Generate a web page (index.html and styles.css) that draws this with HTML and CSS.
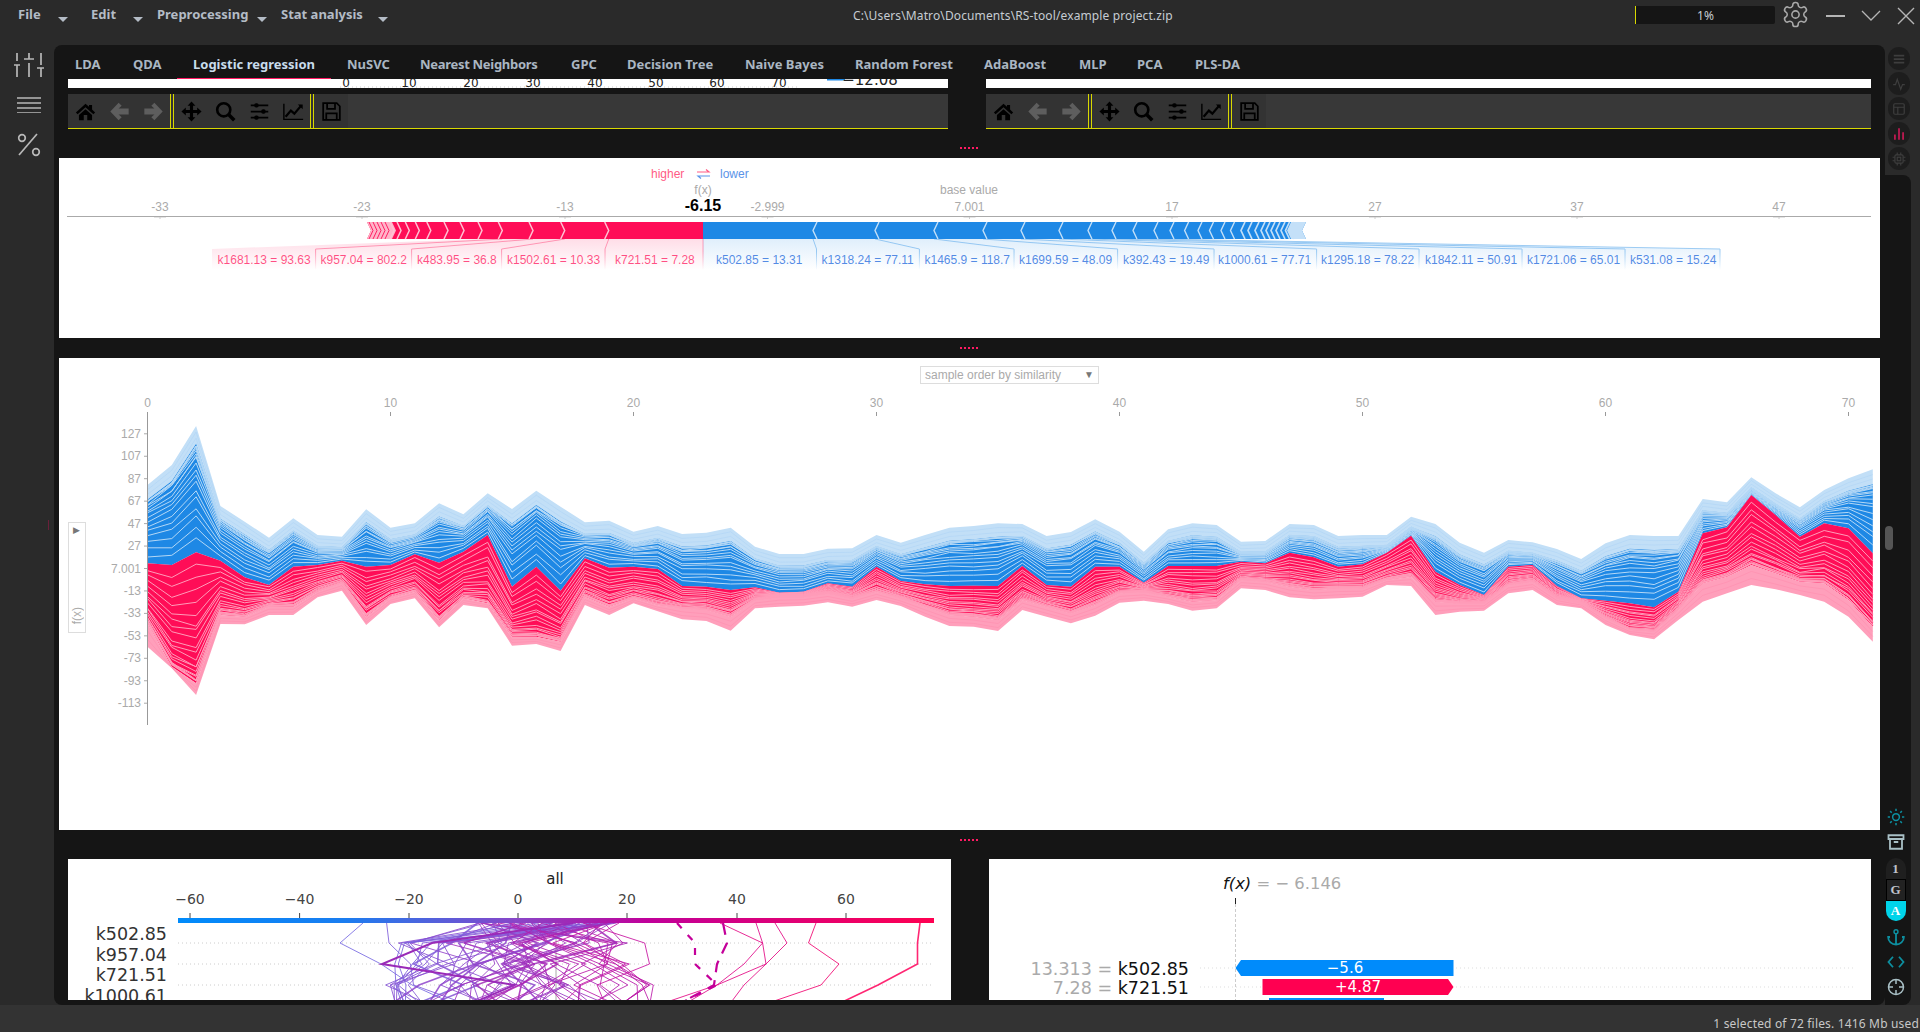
FILE: index.html
```html
<!DOCTYPE html>
<html lang="en">
<head>
    <meta charset="UTF-8">
    <title>RS-tool</title>
    <link rel="stylesheet" href="styles.css">
</head>
<body>
    <svg class="defs" width="0" height="0">
        <symbol id="i-home" viewBox="0 0 24 24"><path d="M12 3 L1 13 L3 15 L12 7 L21 15 L23 13 L19.5 9.8 V4.5 H16 V6.6Z M4.5 16 L12 9.3 L19.5 16 V22 H14 V16 H10 V22 H4.5Z"/></symbol>
        <symbol id="i-left" viewBox="0 0 24 24"><path d="M11 2 L1.5 12 L11 22 L14.5 18.5 L11 15.5 H22.5 V8.5 H11 L14.5 5.5Z"/></symbol>
        <symbol id="i-right" viewBox="0 0 24 24"><path d="M13 2 L22.5 12 L13 22 L9.5 18.5 L13 15.5 H1.5 V8.5 H13 L9.5 5.5Z"/></symbol>
        <symbol id="i-move" viewBox="0 0 24 24"><path d="M12 0.5 L16.5 5.5 H13.8 V10.2 H18.5 V7.5 L23.5 12 L18.5 16.5 V13.8 H13.8 V18.5 H16.5 L12 23.5 L7.5 18.5 H10.2 V13.8 H5.5 V16.5 L0.5 12 L5.5 7.5 V10.2 H10.2 V5.5 H7.5Z"/></symbol>
        <symbol id="i-search" viewBox="0 0 24 24"><circle cx="10" cy="10" r="7.5" fill="none" stroke="#000" stroke-width="3"/><path d="M15.5 15.5 L22 22" stroke="#000" stroke-width="4"/></symbol>
        <symbol id="i-sliders" viewBox="0 0 24 24"><path d="M2 5 H22 M2 12 H22 M2 19 H22" stroke="#000" stroke-width="2"/><rect x="6" y="2.5" width="5" height="5" rx="2"/><rect x="14" y="9.5" width="5" height="5" rx="2"/><rect x="6" y="16.5" width="5" height="5" rx="2"/></symbol>
        <symbol id="i-chart" viewBox="0 0 24 24"><path d="M1 3 V21 H23" fill="none" stroke="#000" stroke-width="1.6"/><path d="M3 18 L9 11 L13 14.5 L21 5" fill="none" stroke="#000" stroke-width="2.6"/><path d="M17 4 H22.5 V9.5Z"/></symbol>
        <symbol id="i-save" viewBox="0 0 24 24"><path d="M2.5 2.5 H18 L21.5 6 V21.5 H2.5Z M7 2.5 V9 H16 V2.5 M6 21.5 V14 H18 V21.5" fill="none" stroke="#000" stroke-width="2"/></symbol>
    </svg>

    <header class="titlebar">
        <nav class="menu">
            <span class="menu-item item-file">File</span>
            <span class="menu-item item-edit">Edit</span>
            <span class="menu-item item-pre">Preprocessing</span>
            <span class="menu-item item-stat">Stat analysis</span>
        </nav>
        <div class="path">C:\Users\Matro\Documents\RS-tool/example project.zip</div>
        <div class="progress">1%</div>
        <svg class="gear" viewBox="0 0 24 24"><path d="M12.22 2h-.44a2 2 0 0 0-2 2v.18a2 2 0 0 1-1 1.73l-.43.25a2 2 0 0 1-2 0l-.15-.08a2 2 0 0 0-2.73.73l-.22.38a2 2 0 0 0 .73 2.73l.15.1a2 2 0 0 1 1 1.72v.51a2 2 0 0 1-1 1.74l-.15.09a2 2 0 0 0-.73 2.73l.22.38a2 2 0 0 0 2.73.73l.15-.08a2 2 0 0 1 2 0l.43.25a2 2 0 0 1 1 1.73V20a2 2 0 0 0 2 2h.44a2 2 0 0 0 2-2v-.18a2 2 0 0 1 1-1.73l.43-.25a2 2 0 0 1 2 0l.15.08a2 2 0 0 0 2.73-.73l.22-.39a2 2 0 0 0-.73-2.73l-.15-.08a2 2 0 0 1-1-1.74v-.5a2 2 0 0 1 1-1.74l.15-.09a2 2 0 0 0 .73-2.73l-.22-.38a2 2 0 0 0-2.73-.73l-.15.08a2 2 0 0 1-2 0l-.43-.25a2 2 0 0 1-1-1.73V4a2 2 0 0 0-2-2z"/><circle cx="12" cy="12" r="3"/></svg>
        <svg class="win-btn btn-min" viewBox="0 0 20 20"><path d="M0 10 H19"/></svg>
        <svg class="win-btn btn-chev" viewBox="0 0 20 20"><path d="M1 5 L10 14 L19 5"/></svg>
        <svg class="win-btn btn-close" viewBox="0 0 20 20"><path d="M2 2 L18 18 M18 2 L2 18"/></svg>
    </header>

    <div class="workspace">
        <aside class="left-rail">
            <svg class="rail-icon" width="30" height="24" viewBox="0 0 30 24"><path d="M3 0 V8 M0 12 H6 M3 12 V24 M15 0 V6 M10 6 H20 M15 10 V24 M27 0 V12 M23 15 H30 M27 15 V24"/></svg>
            <svg class="rail-icon" width="24" height="16" viewBox="0 0 24 16"><path d="M0 1 H24 M0 6 H24 M0 11 H24 M0 16 H24"/></svg>
            <svg class="rail-icon" width="24" height="24" viewBox="0 0 24 24"><circle cx="5" cy="5" r="3.3"/><circle cx="19" cy="19" r="3.3"/><path d="M20 1 L2 22"/></svg>
            <span class="rail-mark"></span>
        </aside>

        <main class="main">
            <div class="tabs">
                <span class="tab">LDA</span>
                <span class="tab">QDA</span>
                <span class="tab active">Logistic regression</span>
                <span class="tab">NuSVC</span>
                <span class="tab tab-tight">Nearest Neighbors</span>
                <span class="tab">GPC</span>
                <span class="tab">Decision Tree</span>
                <span class="tab">Naive Bayes</span>
                <span class="tab">Random Forest</span>
                <span class="tab">AdaBoost</span>
                <span class="tab">MLP</span>
                <span class="tab">PCA</span>
                <span class="tab">PLS-DA</span>
            </div>

            <div class="row-top">
                <div class="plot-top plot-top-left">
                    <svg class="strip" width="880" height="9" viewBox="68 79 880 9">
                        <path d="M340 87 H800" stroke="#ccc" stroke-dasharray="1 3"/>
                        <rect x="827" y="79" width="18" height="1.5" fill="#1e88e5"/>
                        <g class="strip-ticks">
                            <text x="346" y="87">0</text>
                            <text x="409" y="87">10</text>
                            <text x="471" y="87">20</text>
                            <text x="533" y="87">30</text>
                            <text x="595" y="87">40</text>
                            <text x="656" y="87">50</text>
                            <text x="717" y="87">60</text>
                            <text x="779" y="87">70</text>
                        </g>
                        <text class="strip-value" x="870" y="85">−12.08</text>
                    </svg>
                    <div class="toolbar">
                        <div class="tool"><svg class="t-home"><use href="#i-home"/></svg></div>
                        <div class="tool off"><svg><use href="#i-left"/></svg></div>
                        <div class="tool off"><svg><use href="#i-right"/></svg></div>
                        <div class="tool-sep"></div>
                        <div class="tool"><svg><use href="#i-move"/></svg></div>
                        <div class="tool"><svg><use href="#i-search"/></svg></div>
                        <div class="tool"><svg><use href="#i-sliders"/></svg></div>
                        <div class="tool"><svg><use href="#i-chart"/></svg></div>
                        <div class="tool-sep"></div>
                        <div class="tool"><svg><use href="#i-save"/></svg></div>
                    </div>
                </div>
                <div class="plot-top plot-top-right">
                    <div class="strip blank"></div>
                    <div class="toolbar">
                        <div class="tool"><svg class="t-home"><use href="#i-home"/></svg></div>
                        <div class="tool off"><svg><use href="#i-left"/></svg></div>
                        <div class="tool off"><svg><use href="#i-right"/></svg></div>
                        <div class="tool-sep"></div>
                        <div class="tool"><svg><use href="#i-move"/></svg></div>
                        <div class="tool"><svg><use href="#i-search"/></svg></div>
                        <div class="tool"><svg><use href="#i-sliders"/></svg></div>
                        <div class="tool"><svg><use href="#i-chart"/></svg></div>
                        <div class="tool-sep"></div>
                        <div class="tool"><svg><use href="#i-save"/></svg></div>
                    </div>
                </div>
            </div>

            <div class="splitter tall low"><span></span></div>

            <section class="panel force-panel">
                <svg id="force" width="1821" height="180" viewBox="59 158 1821 180">
                    <defs>
                        <linearGradient id="fade-red" gradientUnits="userSpaceOnUse" x1="0" y1="239" x2="0" y2="270">
                            <stop offset="0" stop-color="#ff0d57" stop-opacity="0.14"/>
                            <stop offset="1" stop-color="#ff0d57" stop-opacity="0"/>
                        </linearGradient>
                        <linearGradient id="fade-blue" gradientUnits="userSpaceOnUse" x1="0" y1="239" x2="0" y2="270">
                            <stop offset="0" stop-color="#1e88e5" stop-opacity="0.14"/>
                            <stop offset="1" stop-color="#1e88e5" stop-opacity="0"/>
                        </linearGradient>
                        <linearGradient id="line-red" gradientUnits="userSpaceOnUse" x1="0" y1="239" x2="0" y2="270">
                            <stop offset="0.4" stop-color="#ff9db9"/>
                            <stop offset="1" stop-color="#ff9db9" stop-opacity="0"/>
                        </linearGradient>
                        <linearGradient id="line-blue" gradientUnits="userSpaceOnUse" x1="0" y1="239" x2="0" y2="270">
                            <stop offset="0.4" stop-color="#9ccbf3"/>
                            <stop offset="1" stop-color="#9ccbf3" stop-opacity="0"/>
                        </linearGradient>
                    </defs>
                    <text class="legend-red" x="651" y="178">higher</text>
                    <path d="M697 172 H709 L706 169.5" class="legend-arrows arrow-red"/>
                    <path d="M710 176 H698 L701 178.5" class="legend-arrows"/>
                    <text class="legend-blue" x="720" y="178">lower</text>
                    <text class="f-grey mid" x="703" y="194">f(x)</text>
                    <text class="f-value mid" x="703" y="211">-6.15</text>
                    <text class="f-grey mid" x="969" y="194">base value</text>
                </svg>
            </section>

            <div class="splitter"><span></span></div>

            <section class="panel stream-panel">
                <svg id="stream" width="1821" height="472" viewBox="59 358 1821 472"></svg>
                <div class="order-select">sample order by similarity<span class="caret">▼</span></div>
                <div class="side-select"><span class="caret">▶</span><span class="side-label">f(x)</span></div>
            </section>

            <div class="splitter tall high"><span></span></div>

            <div class="row-bottom">
                <section class="panel">
                    <svg id="decision" width="883" height="141" viewBox="68 859 883 141">
                        <defs>
                            <linearGradient id="bar-grad" x1="0" x2="1" y1="0" y2="0">
                                <stop offset="0" stop-color="#008bfb"/>
                                <stop offset="0.22" stop-color="#1a7df0"/>
                                <stop offset="0.45" stop-color="#8a45c8"/>
                                <stop offset="0.62" stop-color="#c0009a"/>
                                <stop offset="1" stop-color="#ff0051"/>
                            </linearGradient>
                        </defs>
                        <text class="dj-title mid" x="555" y="884">all</text>
                    </svg>
                </section>
                <section class="panel">
                    <svg id="waterfall" width="882" height="141" viewBox="989 859 882 141">
                        <text class="dj-head" x="1223" y="889"><tspan class="fx">f(x)</tspan><tspan class="wf-grey"> = − 6.146</tspan></text>
                        <path d="M1235.5 898 V904" stroke="#222"/>
                        <path d="M1235.5 904 V1000" stroke="#ccc" stroke-dasharray="3 2"/>
                        <path d="M1200 968 H1855 M1200 987 H1855" stroke="#ddd" stroke-dasharray="1 3"/>
                        <text class="dj-label end" x="1189" y="975"><tspan class="wf-grey">13.313 = </tspan>k502.85</text>
                        <text class="dj-label end" x="1189" y="994"><tspan class="wf-grey">7.28 = </tspan>k721.51</text>
                        <path d="M1235.5 968 L1241 960 H1453.5 V976 H1241Z" fill="#008bfb"/>
                        <path d="M1262.5 979 H1448 L1453.5 987 L1448 995 H1262.5Z" fill="#ff0051"/>
                        <rect x="1269" y="998" width="115" height="4" fill="#008bfb"/>
                        <text class="wf-bar mid" x="1345" y="973">−5.6</text>
                        <text class="wf-bar mid" x="1358" y="992">+4.87</text>
                    </svg>
                </section>
            </div>
        </main>

        <aside class="right-rail">
            <div class="pills">
                <div class="pill"><svg viewBox="0 0 24 24"><path d="M3 6 H21 M3 12 H21 M3 18 H21" stroke-width="3"/></svg></div>
                <div class="pill"><svg viewBox="0 0 24 24"><path d="M2 13 H6 L9 4 L15 21 L18 13 H22"/></svg></div>
                <div class="pill"><svg viewBox="0 0 24 24"><rect x="3" y="3" width="18" height="18" rx="2"/><path d="M3 9 H21 M10 9 V21"/></svg></div>
                <div class="pill active"><svg viewBox="0 0 24 24"><path d="M5 22 V13 M12 22 V2 M19 22 V9" stroke-width="3"/></svg></div>
                <div class="pill"><svg viewBox="0 0 24 24"><rect x="5" y="5" width="14" height="14" rx="2"/><rect x="9" y="9" width="6" height="6"/><path d="M9 1 V5 M15 1 V5 M9 19 V23 M15 19 V23 M1 9 H5 M1 15 H5 M19 9 H23 M19 15 H23"/></svg></div>
            </div>
            <div class="side-panel">
                <span class="scroll-thumb"></span>
                <svg class="side-icon teal" viewBox="0 0 24 24"><circle cx="12" cy="12" r="4.5"/><path d="M12 1 V4 M12 20 V23 M1 12 H4 M20 12 H23 M4.2 4.2 L6.3 6.3 M17.7 17.7 L19.8 19.8 M4.2 19.8 L6.3 17.7 M17.7 6.3 L19.8 4.2"/></svg>
                <svg class="side-icon pale" viewBox="0 0 24 24"><path d="M2 3 H22 V8 H2Z M4 8 V21 H20 V8 M9 12 H15" stroke-width="2.4"/></svg>
                <div class="view-switch">
                    <span class="view view-1">1</span>
                    <span class="view view-g">G</span>
                    <span class="view view-a">A</span>
                </div>
                <svg class="side-icon teal" viewBox="0 0 24 24"><circle cx="12" cy="5" r="2.6"/><path d="M12 8 V22 M4 12 H1.5 A10.5 10 0 0 0 22.5 12 H20" stroke-width="2.4"/></svg>
                <svg class="side-icon teal" viewBox="0 0 24 24"><path d="M8 5 L2 12 L8 19 M16 5 L22 12 L16 19" stroke-width="2.4"/></svg>
                <svg class="side-icon pale" viewBox="0 0 24 24"><circle cx="12" cy="12" r="10"/><path d="M12 2 V8 M12 16 V22 M2 12 H8 M16 12 H22"/></svg>
            </div>
        </aside>
    </div>

    <footer class="statusbar">1 selected of 72 files. 1416 Mb used</footer>

    <script src="plots.js"></script>
</body>
</html>
```

FILE: styles.css
```css
* {
    box-sizing: border-box;
}

body {
    margin: 0;
    width: 1920px;
    height: 1032px;
    overflow: hidden;
    background: #2a2a2a;
    font-family: "Noto Sans", sans-serif;
    color: #c6ccd2;
    display: flex;
    flex-direction: column;
}

.defs {
    position: absolute;
}

/* title bar */

.titlebar {
    height: 45px;
    display: flex;
    align-items: flex-start;
    flex-shrink: 0;
}

.menu {
    width: 853px;
    display: flex;
    flex-shrink: 0;
}

.menu-item {
    font-size: 13px;
    font-weight: 700;
    line-height: 18px;
    margin-top: 5px;
    color: #b4bcc6;
    position: relative;
}

.menu-item::after {
    content: "";
    position: absolute;
    top: 12px;
    border-left: 5px solid transparent;
    border-right: 5px solid transparent;
    border-top: 5px solid #b4bcc6;
}

.item-file { margin-left: 18px; width: 73px; }
.item-file::after { left: 40px; }
.item-edit { width: 66px; }
.item-edit::after { left: 42px; }
.item-pre { width: 124px; }
.item-pre::after { left: 100px; }
.item-stat { width: 110px; }
.item-stat::after { left: 97px; }

.path {
    width: 782px;
    font-size: 12px;
    letter-spacing: 0.12px;
    line-height: 18px;
    margin-top: 7px;
    flex-shrink: 0;
}

.progress {
    width: 140px;
    height: 18px;
    margin-top: 6px;
    background: #151515;
    border-left: 1px solid #d8d800;
    border-radius: 0 2px 2px 0;
    font-size: 12px;
    line-height: 20px;
    text-align: center;
    flex-shrink: 0;
}

.gear {
    width: 29px;
    height: 29px;
    margin: 0 0 0 6px;
    fill: none;
    stroke: #a9a9a9;
    stroke-width: 1.3;
    flex-shrink: 0;
}

.win-btn {
    width: 20px;
    height: 20px;
    margin-top: 6px;
    fill: none;
    stroke: #b5b5b5;
    flex-shrink: 0;
}

.btn-min { margin-left: 16px; stroke-width: 2; }
.btn-chev { margin-left: 15px; stroke-width: 1.3; }
.btn-close { margin-left: 15px; stroke-width: 1.4; }

/* workspace */

.workspace {
    height: 960px;
    display: flex;
    flex-shrink: 0;
}

.left-rail {
    width: 54px;
    flex-shrink: 0;
    display: flex;
    flex-direction: column;
    align-items: center;
    padding: 8px 0 0 4px;
    gap: 20px;
    position: relative;
}

.rail-icon {
    fill: none;
    stroke: #b8b8b8;
    stroke-width: 1.7;
    flex-shrink: 0;
}

.rail-mark {
    position: absolute;
    left: 48px;
    top: 475px;
    width: 1px;
    height: 10px;
    background: #6a1f3a;
}

.main {
    width: 1831px;
    height: 960px;
    background: #151515;
    border-radius: 8px;
    flex-shrink: 0;
}

.tabs {
    height: 34px;
    padding-left: 5px;
    display: grid;
    grid-template-columns: 58px 60px 154px 73px 151px 56px 118px 110px 129px 95px 58px 58px 90px;
}

.tab {
    padding-left: 16px;
    font-size: 13px;
    font-weight: 700;
    line-height: 39px;
    height: 34px;
    color: #aab6c2;
    white-space: nowrap;
}

.tab-tight {
    letter-spacing: -0.3px;
}

.tab.active {
    color: #c8dcec;
    border-bottom: 1px solid #ff1a63;
}

.row-top {
    display: flex;
    gap: 38px;
    padding-left: 14px;
}

.plot-top-left { width: 880px; }
.plot-top-right { width: 885px; }

.strip {
    display: block;
    height: 9px;
    background: #fff;
}

.strip-ticks text {
    font: 12px "DejaVu Sans", sans-serif;
    fill: #222;
    text-anchor: middle;
}

.strip-value {
    font: 15px "DejaVu Sans", sans-serif;
    fill: #222;
    text-anchor: middle;
}

.toolbar {
    height: 35px;
    margin-top: 6px;
    background: #383838;
    border-bottom: 1px solid #d8d800;
    display: flex;
}

.tool {
    width: 34px;
    height: 34px;
    background: #333;
    display: flex;
    align-items: center;
    justify-content: center;
}

.tool svg {
    width: 21px;
    height: 21px;
    fill: #000;
}

.tool.off svg {
    fill: #5e5e5e;
}

.tool-sep {
    width: 4px;
    height: 34px;
    background: #333;
    border-left: 1px solid #d8d800;
    border-right: 1px solid #d8d800;
}

.splitter {
    height: 20px;
    display: flex;
    align-items: center;
    justify-content: center;
    padding-right: 1px;
}

.splitter.tall {
    height: 29px;
}

.splitter.low {
    padding-top: 9px;
}

.splitter.high {
    padding-bottom: 9px;
}

.splitter span {
    width: 18px;
    height: 2px;
    background: repeating-linear-gradient(90deg, #ff1a63 0 2px, transparent 2px 4px);
}

.panel {
    background: #fff;
    position: relative;
    overflow: hidden;
}

.panel svg {
    display: block;
}

.force-panel,
.stream-panel {
    margin-left: 5px;
    width: 1821px;
}

.force-panel { height: 180px; }
.stream-panel { height: 472px; }

.row-bottom {
    display: flex;
    gap: 38px;
    padding-left: 14px;
    height: 141px;
}

.row-bottom .panel:first-child { width: 883px; }
.row-bottom .panel:last-child { width: 882px; }

/* force plot and stream plot text */

#force text,
#stream text {
    font-family: "Liberation Sans", Arial, sans-serif;
    font-size: 12px;
}

.legend-red { fill: #ff5c85; }
.legend-blue { fill: #5b93e8; }

.legend-arrows {
    fill: none;
    stroke-width: 1.2;
    stroke: #5b93e8;
}

.legend-arrows.arrow-red {
    stroke: #ff5c85;
}

.mid { text-anchor: middle; }
.end { text-anchor: end; }

#force .f-grey { fill: #aaa; }

#force .f-value {
    font-size: 16px;
    font-weight: 700;
    fill: #000;
}

#force .axis-label,
#stream .axis-label {
    fill: #aaa;
}

#force .label-red { fill: #ff0d57; fill-opacity: 0.72; }
#force .label-blue { fill: #2f72de; fill-opacity: 0.82; }

.order-select {
    position: absolute;
    left: 861px;
    top: 8px;
    width: 179px;
    height: 18px;
    border: 1px solid #ddd;
    font: 12px/16px "Liberation Sans", Arial, sans-serif;
    color: #aaa;
    padding-left: 4px;
}

.order-select .caret {
    position: absolute;
    right: 4px;
    top: 0;
    font-size: 10px;
    color: #777;
}

.side-select {
    position: absolute;
    left: 9px;
    top: 164px;
    width: 18px;
    height: 111px;
    border: 1px solid #ddd;
    font: 12px "Liberation Sans", Arial, sans-serif;
    color: #aaa;
}

.side-select .caret {
    position: absolute;
    left: 4px;
    top: 2px;
    font-size: 9px;
    color: #777;
}

.side-label {
    position: absolute;
    left: 1px;
    bottom: 8px;
    writing-mode: vertical-rl;
    transform: rotate(180deg);
}

/* matplotlib panels */

#decision text,
#waterfall text {
    font-family: "DejaVu Sans", sans-serif;
}

.dj-title { font-size: 15px; fill: #222; }
#decision .dj-tick { font-size: 14px; fill: #444; text-anchor: middle; }
#decision .dj-row { font-size: 17.5px; fill: #333; text-anchor: end; }

.dj-head { font-size: 16.4px; fill: #111; }
.dj-label { font-size: 17.5px; fill: #111; }
.wf-grey { fill: #aaa; }
.fx { font-style: italic; }
.wf-bar { font-size: 15px; fill: #fff; }

/* right rail */

.right-rail {
    width: 35px;
    flex-shrink: 0;
    display: flex;
    flex-direction: column;
}

.pills {
    height: 130px;
    padding: 2px 0 0 3px;
    display: flex;
    flex-direction: column;
    gap: 2px;
}

.pill {
    width: 22px;
    height: 23px;
    border-radius: 11px;
    background: #1d1d1d;
    display: flex;
    align-items: center;
    justify-content: center;
}

.pill svg {
    width: 14px;
    height: 14px;
    fill: none;
    stroke: #3e3e3e;
    stroke-width: 2;
}

.pill.active svg {
    stroke: #c01a52;
}

.side-panel {
    width: 26px;
    height: 830px;
    background: #151515;
    border-radius: 0 8px 8px 0;
    position: relative;
    display: flex;
    flex-direction: column;
    align-items: center;
    justify-content: flex-end;
    gap: 7px;
    padding: 0 5px 9px 0;
}

.scroll-thumb {
    position: absolute;
    left: 0;
    top: 351px;
    width: 8px;
    height: 24px;
    border-radius: 4px;
    background: #555;
}

.side-icon {
    width: 18px;
    height: 18px;
    fill: none;
    stroke-width: 2;
    flex-shrink: 0;
}

.side-icon.teal { stroke: #0d8fa0; }
.side-icon.pale { stroke: #a9c0c6; }

.view-switch {
    display: flex;
    flex-direction: column;
    width: 20px;
    font: 700 13px "Liberation Serif", serif;
}

.view {
    height: 22px;
    display: flex;
    align-items: center;
    justify-content: center;
}

.view-1 {
    height: 21px;
    background: #1f1f1f;
    border-radius: 10px 10px 0 0;
    color: #c0c4cc;
}

.view-g {
    background: #222;
    border: 1px solid #000;
    color: #c0c4cc;
}

.view-a {
    height: 20px;
    background: #00d4ea;
    border-radius: 0 0 10px 10px;
    color: #fff;
}

.statusbar {
    height: 27px;
    background: #333;
    padding: 10px 1px 0 0;
    text-align: right;
    font-size: 12px;
    letter-spacing: 0.17px;
    line-height: 18px;
    color: #c8c8c8;
}
```

FILE: plots.js
```js
const SVG_NS = 'http://www.w3.org/2000/svg';

function add(parent, tag, attrs, text) {
    const node = document.createElementNS(SVG_NS, tag);
    for (const key in attrs) {
        node.setAttribute(key, attrs[key]);
    }
    if (text !== undefined) {
        node.textContent = text;
    }
    parent.appendChild(node);
    return node;
}

// small seeded generator so the picture is the same on every load
let seed = 7;
function rnd() {
    seed = (seed * 16807) % 2147483647;
    return seed / 2147483647;
}

const points = (list) => list.map(p => p[0].toFixed(1) + ',' + p[1].toFixed(1)).join(' ');

/* ---------- force plot ---------- */

function drawForce() {
    const svg = document.getElementById('force');
    const ticks = [[160, '-33'], [362, '-23'], [565, '-13'], [767.5, '-2.999'], [969.5, '7.001'],
        [1172, '17'], [1375, '27'], [1577, '37'], [1779, '47']];
    ticks.forEach(t => {
        add(svg, 'text', { class: 'axis-label mid', x: t[0], y: 211 }, t[1]);
        add(svg, 'path', { d: `M${t[0]} 216 V219 M${t[0] - 6} 217 H${t[0] + 6}`, stroke: '#ccc' });
    });
    add(svg, 'path', { d: 'M67 216.5 H1871', stroke: '#aaa' });

    const redLabels = [
        [217.6, 'k1681.13 = 93.63', 315.6, 502.3],
        [320.5, 'k957.04 = 802.2', 411.6, 533],
        [417, 'k483.95 = 36.8', 501.6, 564.7],
        [507, 'k1502.61 = 10.33', 605, 608.7],
        [615, 'k721.51 = 7.28', 703, 703],
    ];
    const blueLabels = [
        [716, 'k502.85 = 13.31', 816.5, 813],
        [821.6, 'k1318.24 = 77.11', 919.4, 875],
        [924.5, 'k1465.9 = 118.7', 1014, 934],
        [1019, 'k1699.59 = 48.09', 1117.6, 983],
        [1123, 'k392.43 = 19.49', 1214, 1021],
        [1218, 'k1000.61 = 77.71', 1316.6, 1059],
        [1321, 'k1295.18 = 78.22', 1419, 1088],
        [1425, 'k1842.11 = 50.91', 1522, 1112],
        [1527, 'k1721.06 = 65.01', 1625, 1133],
        [1630, 'k531.08 = 15.24', 1720, 1154],
    ];

    // pale fans between the bar and the labels
    let prevSep = 212, prevTip = 482;
    redLabels.forEach(l => {
        add(svg, 'polygon', { fill: 'url(#fade-red)', points: points([[prevTip, 239], [l[3], 239], [l[2], 249], [l[2], 270], [prevSep, 270], [prevSep, 249]]) });
        add(svg, 'polyline', { fill: 'none', stroke: 'url(#line-red)', points: points([[l[3], 239], [l[2], 249], [l[2], 270]]) });
        prevSep = l[2];
        prevTip = l[3];
    });
    prevSep = 703;
    prevTip = 703;
    blueLabels.forEach(l => {
        add(svg, 'polygon', { fill: 'url(#fade-blue)', points: points([[prevTip, 239], [l[3], 239], [l[2], 249], [l[2], 270], [prevSep, 270], [prevSep, 249]]) });
        add(svg, 'polyline', { fill: 'none', stroke: 'url(#line-blue)', points: points([[l[3], 239], [l[2], 249], [l[2], 270]]) });
        prevSep = l[2];
        prevTip = l[3];
    });
    redLabels.forEach(l => add(svg, 'text', { class: 'label-red', x: l[0], y: 264 }, l[1]));
    blueLabels.forEach(l => add(svg, 'text', { class: 'label-blue', x: l[0], y: 264 }, l[1]));

    // bar
    add(svg, 'polygon', { fill: '#ff0d57', points: '367,222 703,222 703,239 367,239 371,230.5' });
    add(svg, 'polygon', { fill: '#1e88e5', points: '703,222 1306,222 1302,230.5 1306,239 703,239' });
    add(svg, 'polygon', { fill: '#ffb4c9', points: '367,222 392,222 396,230.5 392,239 367,239 371,230.5' });
    add(svg, 'polygon', { fill: '#c4e0f8', points: '1291,222 1306,222 1302,230.5 1306,239 1291,239 1287,230.5' });

    [608.7, 564.7, 533, 502.3, 482, 464, 448, 430.8, 419.3, 409.3, 401, 394, 389, 385, 381, 377, 373].forEach(x => {
        add(svg, 'polyline', { fill: 'none', stroke: x < 392 ? '#ff0d57' : '#ffc2d3', 'stroke-width': x < 392 ? 0.9 : 1.5, points: `${x - 4},222 ${x},230.5 ${x - 4},239` });
    });
    [813, 875, 934, 983, 1021, 1059, 1088, 1112, 1133, 1154, 1170, 1184.6, 1198, 1209.5, 1221, 1230.5, 1241, 1248, 1255, 1261, 1266, 1271, 1276, 1281, 1285.5, 1290].forEach(x => {
        add(svg, 'polyline', { fill: 'none', stroke: '#c4e0f8', 'stroke-width': x > 1240 ? 1.7 : 1.4, points: `${x + 4},222 ${x},230.5 ${x + 4},239` });
    });
}

/* ---------- stream plot ---------- */

// one row per sample: top of pale blue, blue/red edge, red/pink edge, bottom of pink,
// read off the plot at 3x, so y on the page is 350 + value / 3
const STREAM = [
    [405, 640, 820, 890], [345, 645, 950, 955], [228, 607, 1000, 1035], [468, 632, 795, 822],
    [515, 682, 800, 823], [563, 705, 770, 795], [505, 650, 770, 795], [555, 645, 725, 742],
    [560, 632, 700, 722], [478, 650, 800, 825], [533, 645, 745, 762], [520, 613, 725, 745],
    [460, 638, 810, 832], [493, 605, 745, 765], [430, 555, 760, 775], [477, 710, 860, 887],
    [422, 650, 860, 882], [470, 722, 875, 903], [517, 625, 740, 765], [512, 653, 770, 795],
    [545, 650, 745, 760], [528, 657, 765, 784], [552, 708, 775, 808], [548, 710, 780, 813],
    [533, 720, 800, 842], [590, 712, 750, 775], [612, 728, 740, 770], [612, 725, 740, 767],
    [596, 700, 730, 757], [595, 710, 745, 770], [555, 650, 725, 750], [578, 693, 745, 768],
    [555, 703, 770, 800], [533, 708, 795, 828], [528, 707, 800, 830], [520, 708, 810, 843],
    [522, 648, 750, 780], [558, 705, 770, 800], [546, 710, 790, 820], [508, 650, 765, 797],
    [545, 650, 730, 758], [605, 698, 725, 752], [538, 648, 740, 762], [520, 648, 755, 782],
    [525, 648, 750, 775], [575, 635, 690, 715], [573, 640, 695, 720], [522, 608, 710, 742],
    [525, 622, 720, 748], [558, 650, 715, 745], [555, 643, 715, 740], [555, 608, 690, 705],
    [500, 557, 680, 708], [522, 665, 755, 795], [578, 705, 760, 785], [608, 735, 760, 782],
    [570, 650, 705, 730], [577, 645, 695, 720], [597, 708, 745, 765], [627, 745, 760, 775],
    [580, 752, 805, 825], [555, 760, 840, 855], [558, 772, 845, 868], [558, 725, 780, 810],
    [447, 550, 700, 755], [457, 532, 680, 730], [382, 435, 645, 705], [430, 495, 670, 718],
    [472, 560, 695, 735], [420, 520, 700, 755], [385, 535, 750, 800], [358, 610, 830, 875],
];

function drawStream() {
    const svg = document.getElementById('stream');
    const xAt = i => 147.5 + i * 24.3;
    const rows = STREAM.map((r, i) => {
        const [top, mid, low, bottom] = r.map(v => 350 + v / 3);
        return { x: xAt(i), top, pale: top + 9 + (mid - top) * 0.07, mid, low, bottom };
    });
    const band = (upper, lower, fill) => {
        const pts = rows.map(r => [r.x, upper(r)]).concat(rows.slice().reverse().map(r => [r.x, lower(r)]));
        add(svg, 'polygon', { fill, points: points(pts) });
    };

    band(r => r.top, r => r.pale, '#c2dff7');
    band(r => r.pale, r => r.mid, '#1e88e5');
    band(r => r.mid, r => r.low, '#ff0d57');
    band(r => r.low, r => r.bottom, '#ff9fbb');

    // strands: thin bands get packed toward the outer edge of each colour
    const strands = (from, to, count, power, stroke, width) => {
        for (let k = 1; k <= count; k++) {
            const base = Math.pow(k / (count + 1), power);
            const pts = rows.map(r => {
                const f = Math.min(0.98, Math.max(0.02, base + (rnd() - 0.5) * 0.05));
                return [r.x, from(r) + (to(r) - from(r)) * f];
            });
            add(svg, 'polyline', { fill: 'none', stroke, 'stroke-width': width, points: points(pts) });
        }
    };
    strands(r => r.pale, r => r.mid, 18, 2.3, '#b4d8f6', 1);
    strands(r => r.top, r => r.pale, 2, 1, '#a6d0f4', 0.4);
    strands(r => r.low, r => r.mid, 20, 2.3, '#ff9cb9', 1);
    strands(r => r.low, r => r.bottom, 2, 1, '#ff86a8', 0.4);

    // axes
    const yTicks = ['127', '107', '87', '67', '47', '27', '7.001', '-13', '-33', '-53', '-73', '-93', '-113'];
    yTicks.forEach((t, i) => {
        const y = 433.8 + i * 22.45;
        add(svg, 'text', { class: 'axis-label end', x: 141, y: y + 4 }, t);
        add(svg, 'path', { d: `M144 ${y} H147`, stroke: '#aaa' });
    });
    for (let t = 0; t <= 70; t += 10) {
        const x = xAt(t);
        add(svg, 'text', { class: 'axis-label mid', x, y: 407 }, String(t));
        add(svg, 'path', { d: `M${x} 412 V416`, stroke: '#999' });
    }
    add(svg, 'path', { d: 'M147.5 412 V725', stroke: '#999' });
}

/* ---------- decision plot ---------- */

function mix(a, b, t) {
    return a.map((v, i) => Math.round(v + (b[i] - v) * t));
}

function lineColor(x) {
    const stops = [[340, [110, 120, 235]], [470, [140, 70, 205]], [570, [175, 30, 175]], [700, [215, 10, 150]], [920, [255, 0, 90]]];
    for (let i = 1; i < stops.length; i++) {
        if (x <= stops[i][0]) {
            const t = Math.max(0, (x - stops[i - 1][0]) / (stops[i][0] - stops[i - 1][0]));
            return `rgb(${mix(stops[i - 1][1], stops[i][1], t).join(',')})`;
        }
    }
    return 'rgb(255,0,90)';
}

// bounce a wandering line back inside the crowded middle of the plot
function reflect(x) {
    if (x < 385) return 770 - x;
    if (x > 655) return 1310 - x;
    return x;
}

function drawDecision() {
    const svg = document.getElementById('decision');
    add(svg, 'path', { d: 'M178 943 H934 M178 964 H934 M178 985 H934', stroke: '#ccc', 'stroke-dasharray': '1 3' });
    add(svg, 'path', { d: 'M556 923 V1000', stroke: '#aaa' });

    const rowsY = [923, 943, 964, 985, 1005];
    // x on the page at each row; the picked ones are the outliers on either side
    const picked = [
        [920, 917.5, 917.5, 878, 836], [816, 808.5, 839, 821, 762.6], [775, 787, 766, 744, 729],
        [756, 762.6, 744, 717, 683], [720, 762.6, 766, 717, 658], [363, 340, 381, 412, 456],
        [386.6, 389, 410.5, 413.5, 468.6],
    ];
    const rows = picked.slice();
    for (let n = 0; n < 66; n++) {
        const start = 470 + rnd() * 150;
        const row = [start, reflect(395 + rnd() * 250)];
        row.push(reflect(row[1] + (rnd() - 0.5) * 170));
        row.push(reflect(row[2] + (rnd() - 0.5) * 130));
        row.push(reflect(row[3] + (rnd() - 0.5) * 100));
        rows.push(row);
    }
    rows.forEach((row, n) => {
        const pts = row.map((x, k) => [x, rowsY[k]]);
        add(svg, 'polyline', { fill: 'none', stroke: lineColor(row[2]), 'stroke-width': n % 7 ? 1 : 1.6, 'stroke-opacity': 0.85, points: points(pts) });
    });
    add(svg, 'polyline', { fill: 'none', stroke: '#9a2ab8', 'stroke-width': 2, points: points([[573, 923], [432, 943], [382, 964], [514.6, 985], [468, 1005]]) });
    add(svg, 'polyline', { fill: 'none', stroke: '#c4009a', 'stroke-width': 2.2, 'stroke-dasharray': '7 9', points: points([[677, 923], [695, 943], [695, 964], [717, 985], [677, 1005]]) });
    add(svg, 'polyline', { fill: 'none', stroke: '#c4009a', 'stroke-width': 2.2, 'stroke-dasharray': '12 8', points: points([[723, 923], [727, 943], [717, 964], [714, 985], [677, 1005]]) });

    add(svg, 'rect', { x: 178, y: 918, width: 756, height: 5, fill: 'url(#bar-grad)' });
    const ticks = [[190, '−60'], [299.6, '−40'], [409, '−20'], [518, '0'], [627, '20'], [737, '40'], [846, '60']];
    ticks.forEach(t => {
        add(svg, 'text', { class: 'dj-tick', x: t[0], y: 904 }, t[1]);
        add(svg, 'path', { d: `M${t[0]} 913 V918`, stroke: '#444' });
    });
    [[940, 'k502.85'], [961, 'k957.04'], [981, 'k721.51'], [1002, 'k1000.61']].forEach(r => {
        add(svg, 'text', { class: 'dj-row', x: 167, y: r[0] }, r[1]);
    });
}

drawForce();
drawStream();
drawDecision();
```
